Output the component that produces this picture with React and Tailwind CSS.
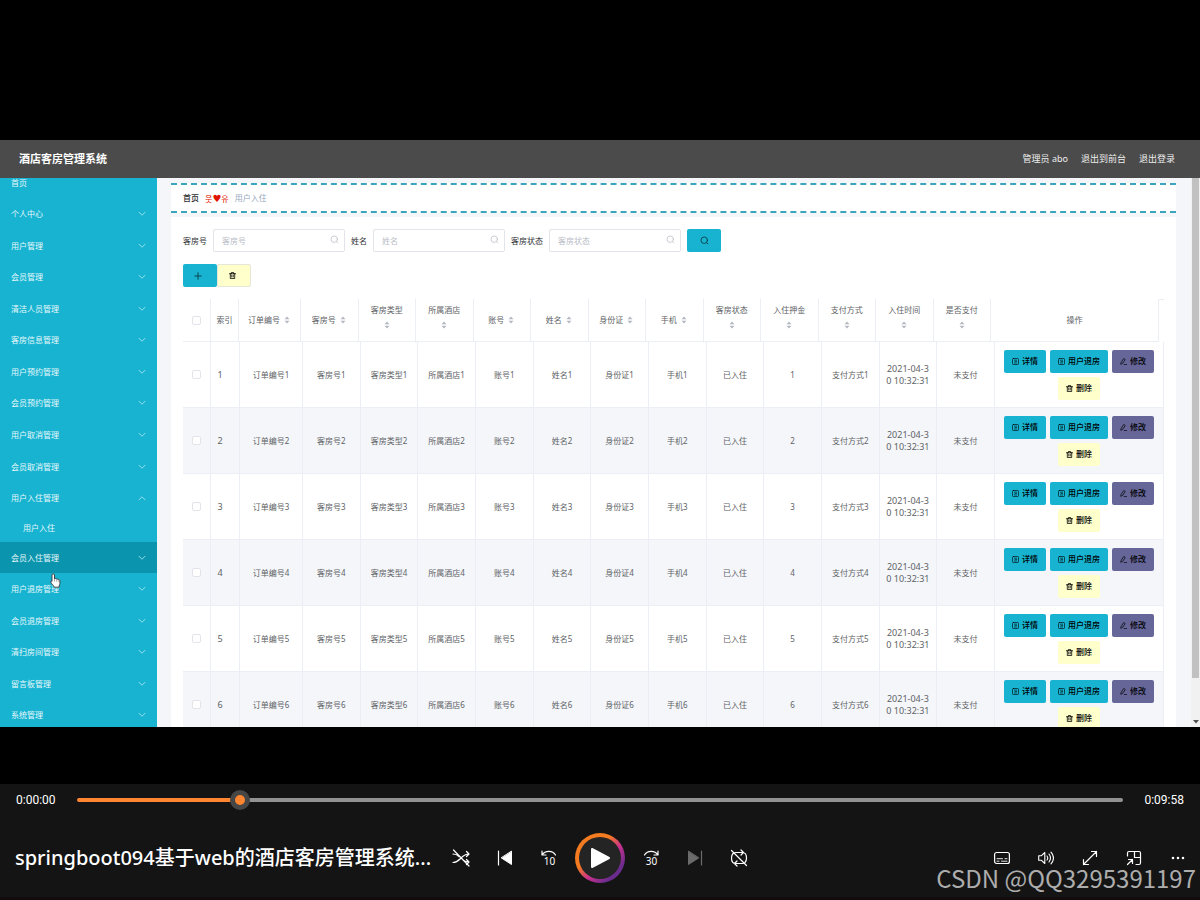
import { useState } from 'react'
import clsx from 'clsx'

const menu = [
  { label: '首页', plain: true },
  { label: '个人中心' },
  { label: '用户管理' },
  { label: '会员管理' },
  { label: '清洁人员管理' },
  { label: '客房信息管理' },
  { label: '用户预约管理' },
  { label: '会员预约管理' },
  { label: '用户取消管理' },
  { label: '会员取消管理' },
  { label: '用户入住管理', children: ['用户入住'] },
  { label: '会员入住管理', active: true },
  { label: '用户退房管理' },
  { label: '会员退房管理' },
  { label: '清扫房间管理' },
  { label: '留言板管理' },
  { label: '系统管理' },
]

const columns = [
  '订单编号', '客房号', '客房类型', '所属酒店', '账号', '姓名', '身份证',
  '手机', '客房状态', '入住押金', '支付方式', '入住时间', '是否支付',
]

const rows = [1, 2, 3, 4, 5, 6].map(n => ({
  id: n,
  cells: [
    `订单编号${n}`, `客房号${n}`, `客房类型${n}`, `所属酒店${n}`, `账号${n}`, `姓名${n}`,
    `身份证${n}`, `手机${n}`, '已入住', `${n}`, `支付方式${n}`, '2021-04-30 10:32:31', '未支付',
  ],
}))

function Icon({ size = 16, box = 16, className, children }) {
  return (
    <svg
      width={size}
      height={size}
      viewBox={`0 0 ${box} ${box}`}
      fill="none"
      stroke="currentColor"
      strokeLinecap="round"
      strokeLinejoin="round"
      className={clsx('shrink-0', className)}
      aria-hidden="true"
    >
      {children}
    </svg>
  )
}

const SearchIcon = ({ className }) => (
  <Icon size={9} className={className}>
    <circle cx="7.5" cy="7.5" r="5.8" strokeWidth="1.5" />
    <path d="M11.5 11.5 14 14" strokeWidth="1.5" />
  </Icon>
)

const TrashIcon = () => (
  <Icon size={7}>
    <path d="M1 4h14M5.5 4V1h5V4M3 4v11h10V4M6.3 7.500v4M9.7 7.500v4" strokeWidth="1.8" />
  </Icon>
)

const TicketIcon = () => (
  <Icon size={7}>
    <rect x="1" y="1" width="14" height="14" rx="2.500" strokeWidth="1.500" />
    <path d="M5.500 5h5M7 8h3.500M5.500 11.300h5" strokeWidth="1.300" />
  </Icon>
)

const EditIcon = () => (
  <Icon size={7}>
    <path d="M3 9.500 8.500 1l3.500 2.300-5.500 8.500L2.500 14zM9.500 15h5.500" strokeWidth="1.600" />
  </Icon>
)

const SortIcon = () => (
  <Icon size={8} className="text-[#b4b8c0]">
    <path d="M8 1 13 6.500H3zM8 15l5-5.500H3z" fill="currentColor" stroke="none" />
  </Icon>
)

function TopBar() {
  return (
    <header className="h-[38px] shrink-0 flex items-center justify-between pl-[19px] pr-[25px] bg-[#4b4b4b] text-white">
      <h1 className="text-[11px] font-bold">酒店客房管理系统</h1>
      <div className="flex gap-[13px] text-[9px] text-[#eeeeee]">
        <span>管理员 abo</span>
        <a href="#front">退出到前台</a>
        <a href="#logout">退出登录</a>
      </div>
    </header>
  )
}

function Sidebar() {
  return (
    <aside className="relative w-[157px] shrink-0 overflow-hidden bg-[#17b3d1] text-[8px] text-[#e6f8fb] flex flex-col">
      <nav className="flex-1 flex flex-col -mt-[11px] -mb-1">
        {menu.map(item => (
          <div key={item.label} className="contents">
            <button
              className={clsx(
                'flex-1 flex items-center justify-between px-[11px] text-left',
                item.active && 'bg-[#0b94ad]'
              )}
            >
              <span>{item.label}</span>
              {!item.plain && (
                <Icon size={8} className={clsx('text-[#a5e3ef]', item.children && 'rotate-180')}>
                  <path d="M2 4.5 8 10.5 14 4.5" strokeWidth="1.8" />
                </Icon>
              )}
            </button>
            {item.children?.map(child => (
              <a key={child} href="#checkin" className="h-7 shrink-0 flex items-center pl-[23px]">
                {child}
              </a>
            ))}
          </div>
        ))}
      </nav>
      <svg className="absolute left-[50px] top-[395px]" width="12" height="15" viewBox="0 0 12 15" aria-hidden="true">
        <path
          d="M3.2.8c.8 0 1.3.5 1.3 1.2v3.8c.3-.5 1.6-.5 1.9.3.5-.4 1.6-.2 1.8.6.7-.3 1.7 0 1.7 1v2.8c0 1.2-.9 1.8-.9 3.7H4.2C4 12.800 1.500 11 .8 9.200c-.3-1 .6-1.500 1.200-.8V2c0-.7.5-1.200 1.200-1.200z"
          fill="white"
          stroke="#333"
          strokeWidth="0.9"
        />
        <path d="M4.500 6v2.500M6.400 6.500v2.200M8.200 7v2" stroke="#777" strokeWidth="0.6" />
      </svg>
    </aside>
  )
}

function Breadcrumb() {
  return (
    <div className="h-[30px] shrink-0 flex items-center gap-[6px] pl-3 bg-white border-y-2 border-dashed border-[#3aa5bd] text-[8px]">
      <a href="#home" className="font-medium text-[#303133]">首页</a>
      <span className="text-[#e01500]">웃<span className="font-['DejaVu_Sans'] text-[10px]">♥</span>유</span>
      <span className="text-[#97a8be]">用户入住</span>
    </div>
  )
}

function SearchField({ label }) {
  return (
    <label className="flex items-center gap-[6px] text-[#303133]">
      {label}
      <span className="relative block">
        <input
          placeholder={label}
          className="block w-[132px] h-[23px] pl-2 pr-5 bg-white border border-[#e2e4ea] rounded-[2px] placeholder:text-[#b9bdc6] outline-none"
        />
        <SearchIcon className="absolute right-[6px] top-[6px] text-[#c0c4cc]" />
      </span>
    </label>
  )
}

function ActionButton({ tone, icon, children }) {
  return (
    <button
      className={clsx(
        'h-[23px] px-2 flex items-center gap-[3px] rounded-[2px] font-medium text-black',
        tone === 'cyan' && 'bg-[#17b3d1]',
        tone === 'purple' && 'bg-[#666699]',
        tone === 'yellow' && 'bg-[#ffffcc]'
      )}
    >
      {icon}
      {children}
    </button>
  )
}

function Check({ label }) {
  return (
    <input
      type="checkbox"
      aria-label={label}
      className="block mx-auto size-[9px] appearance-none bg-white border border-[#e2e4ea] rounded-[2px] checked:bg-[#17b3d1]"
    />
  )
}

function Columns({ index, order, action }) {
  return (
    <colgroup>
      <col className="w-7" />
      <col className={index} />
      <col className={order} />
      {columns.slice(1).map(c => <col key={c} />)}
      <col className={action} />
    </colgroup>
  )
}

function OrderTable() {
  return (
    <div className="mt-3 text-[8px] text-[#606266]">
      <div className="flex">
        <table className="flex-1 table-fixed border-separate border-spacing-0 w-full">
          <Columns index="w-7" order="w-[62px]" action="w-[168px]" />
          <thead>
            <tr className="h-[43px] [&>th]:border-b [&>th]:border-r [&>th]:border-[#ebeef5] [&>th]:font-normal [&>th]:p-0">
              <th><Check label="全选" /></th>
              <th>索引</th>
              {columns.map((c, i) => (
                <th key={c}>
                  <div className={clsx('flex items-center justify-center', c.length > 3 && i > 0 ? 'flex-col gap-1 pb-2 leading-[14px]' : 'gap-[3px]')}>
                    {c}
                    <SortIcon />
                  </div>
                </th>
              ))}
              <th>操作</th>
            </tr>
          </thead>
        </table>
        <div className="w-[5px] shrink-0 border-t border-[#ebeef5]" />
      </div>
      <table className="w-full table-fixed border-separate border-spacing-0">
        <Columns index="w-[29px]" order="w-[63px]" action="w-[169px]" />
        <tbody>
          {rows.map(row => (
            <tr
              key={row.id}
              className="h-[66px] even:bg-[#f4f6fa] [&>td]:border-b [&>td]:border-r [&>td]:border-[#ebeef5] [&>td]:p-0 [&>td]:text-center"
            >
              <td><Check label={`选择第${row.id}行`} /></td>
              <td><div className="pr-[10px] text-[9px]">{row.id}</div></td>
              {row.cells.map((cell, i) => (
                <td key={columns[i]}>
                  <div className={clsx(columns[i] === '入住时间' && 'px-[6px] text-[9px] leading-[12px] break-all')}>{cell}</div>
                </td>
              ))}
              <td>
                <div className="flex flex-wrap justify-center gap-1">
                  <ActionButton tone="cyan" icon={<TicketIcon />}>详情</ActionButton>
                  <ActionButton tone="cyan" icon={<TicketIcon />}>用户退房</ActionButton>
                  <ActionButton tone="purple" icon={<EditIcon />}>修改</ActionButton>
                  <ActionButton tone="yellow" icon={<TrashIcon />}>删除</ActionButton>
                </div>
              </td>
            </tr>
          ))}
        </tbody>
      </table>
    </div>
  )
}

function Content() {
  return (
    <main className="flex-1 min-w-0 overflow-hidden flex flex-col bg-[#f4f6fa] pt-[5px] pl-[14px] pr-[15px]">
      <Breadcrumb />
      <section className="mt-1 flex-1 min-h-0 overflow-hidden bg-white pt-3 px-3">
        <form className="flex items-center gap-[6px] text-[8px]" onSubmit={e => e.preventDefault()}>
          <SearchField label="客房号" />
          <SearchField label="姓名" />
          <SearchField label="客房状态" />
          <button aria-label="查询" className="w-[34px] h-[23px] flex items-center justify-center rounded-[2px] bg-[#17b3d1] text-[#0c3a44]">
            <SearchIcon />
          </button>
        </form>
        <div className="mt-3 flex">
          <button aria-label="新增" className="w-[34px] h-[23px] pr-1 flex items-center justify-center rounded-[2px] bg-[#17b3d1] text-[#0c3a44]">
            <Icon size={8}><path d="M8 1.500v13M1.500 8h13" strokeWidth="1.800" /></Icon>
          </button>
          <button aria-label="删除" className="w-[34px] h-[23px] pr-1 flex items-center justify-center rounded-[2px] bg-[#ffffcc] border border-[#e6e6d8] text-black">
            <TrashIcon />
          </button>
        </div>
        <OrderTable />
      </section>
    </main>
  )
}

function ScrollRail() {
  return (
    <div className="w-[9px] shrink-0 flex flex-col items-center bg-[#f1f1f1]" aria-hidden="true">
      <div className="flex-1 w-[7px] bg-[#c1c1c1]" />
      <div className="h-[49px] flex items-end pb-[3px]">
        <svg width="6" height="4" viewBox="0 0 6 4"><path d="M0 0h6L3 3.500z" fill="#505050" /></svg>
      </div>
    </div>
  )
}

function PlayerButton({ label, children, dim }) {
  return (
    <button aria-label={label} className={clsx('w-11 h-11 flex items-center justify-center', dim ? 'text-[#6b6b6b]' : 'text-white')}>
      {children}
    </button>
  )
}

function Player() {
  const [pos, setPos] = useState(149)
  const pct = pos / 10

  return (
    <footer className="shrink-0 bg-[#141414] text-white border-b-[3px] border-[#120a0d] font-['Noto_Sans','Noto_Sans_CJK_SC',sans-serif]">
      <div className="h-8 px-4 flex items-center text-[12px] font-['Roboto',sans-serif]">
        <span className="w-[61px]">0:00:00</span>
        <input
          type="range"
          min="0"
          max="1000"
          value={pos}
          onChange={e => setPos(Number(e.target.value))}
          aria-label="播放进度"
          className="flex-1 h-1 appearance-none rounded-full [&::-webkit-slider-thumb]:appearance-none [&::-webkit-slider-thumb]:size-5 [&::-webkit-slider-thumb]:rounded-full [&::-webkit-slider-thumb]:border-[5px] [&::-webkit-slider-thumb]:border-[#464646] [&::-webkit-slider-thumb]:bg-[#ff8530]"
          style={{ background: `linear-gradient(to right, #ff8530 ${pct}%, #929292 ${pct}%)` }}
        />
        <span className="w-[61px] text-right">0:09:58</span>
      </div>
      <div className="mt-[17px] pb-[14px] grid grid-cols-[1fr_auto_1fr] items-center">
        <h2 className="min-w-0 pl-[15px] text-[20px] leading-[28px] font-medium whitespace-nowrap">
          springboot094基于web的酒店客房管理系统...
        </h2>
        <div className="flex items-center h-[50px]">
          <PlayerButton label="随机播放">
            <Icon size={18} box={18}>
              <path d="M1 13.500c4 0 5.500-2 8-4.500s4-4 8-4M1 5c3 0 4.500 1 6 2.500M11 11c1.500 1.300 3 2 6 2M14.500 2.500 17 5l-2.500 2.500M14.500 10.500 17 13l-2.500 2.500M1.500 1l15.500 16" strokeWidth="1.200" />
            </Icon>
          </PlayerButton>
          <PlayerButton label="上一个">
            <Icon><path d="M1.500 1v14" strokeWidth="1.200" /><path d="M14.500 1.500v13L4.500 8z" fill="currentColor" strokeWidth="1" /></Icon>
          </PlayerButton>
          <PlayerButton label="后退 10 秒">
            <Icon size={18} box={18}>
              <path d="M2 2v4h4M2.300 5.700C5 1.500 12.500.8 15.500 6" strokeWidth="1.200" />
              <text x="9.500" y="16" textAnchor="middle" fontSize="10" fill="currentColor" stroke="none">10</text>
            </Icon>
          </PlayerButton>
          <div className="w-[58px] flex justify-center">
            <button aria-label="播放" className="size-[50px] p-1 rounded-full bg-[linear-gradient(135deg,#f47b20_38%,#c9318c_58%,#6b2c8f_80%)]">
              <span className="size-full rounded-full bg-[#242424] flex items-center justify-center">
                <Icon size={22} box={22}><path d="M3 2v18L20 11z" fill="currentColor" strokeWidth="2" /></Icon>
              </span>
            </button>
          </div>
          <PlayerButton label="前进 30 秒">
            <Icon size={18} box={18}>
              <path d="M16 2v4h-4M15.700 5.700C13 1.500 5.500.8 2.500 6" strokeWidth="1.200" />
              <text x="9.500" y="16" textAnchor="middle" fontSize="10" fill="currentColor" stroke="none">30</text>
            </Icon>
          </PlayerButton>
          <PlayerButton label="下一个" dim>
            <Icon><path d="M14.500 1v14" strokeWidth="1.200" /><path d="M1.500 1.500v13L11.500 8z" fill="currentColor" strokeWidth="1" /></Icon>
          </PlayerButton>
          <PlayerButton label="循环">
            <Icon size={18} box={18}>
              <path d="M5 3.500h7.500c2.500 0 4 2 4 5.500 0 2-.5 3.500-1.500 4.500M11 1l2.500 2.500L11 6M13 14.500H5.500c-2.500 0-4-2-4-5.500 0-2 .5-3.500 1.500-4.500M7 12l-2.500 2.500L7 17M1.500 1.500l15 15" strokeWidth="1.200" />
            </Icon>
          </PlayerButton>
        </div>
        <div className="flex justify-end">
          <PlayerButton label="字幕">
            <Icon><rect x="0.600" y="2.500" width="14.800" height="11" rx="2" strokeWidth="1.200" /><path d="M3 8.700h5.500M11 8.700h2M3 11.200h2M7.500 11.200H13" strokeWidth="0.900" /></Icon>
          </PlayerButton>
          <PlayerButton label="音量">
            <Icon><path d="M.7 5.800v4.400h2.500l3.600 3.300v-11L3.200 5.800zM9 6q1.500 2 0 4M11 4q3 4 0 8M13 2.200q5 5.800 0 11.600" strokeWidth="1.100" /></Icon>
          </PlayerButton>
          <PlayerButton label="全屏">
            <Icon><path d="M1.500 14.500 14.500 1.500M9.500 1.500h5v5M1.500 9.500v5h5" strokeWidth="1.200" /></Icon>
          </PlayerButton>
          <PlayerButton label="小窗播放">
            <Icon><path d="M1.500 6V3q0-1.500 1.500-1.500h10q1.500 0 1.500 1.500v10q0 1.500-1.500 1.500H10M8.500 1.500v6h6M1.500 14.500 6.500 9.500M2.500 9.500h4v4" strokeWidth="1.200" /></Icon>
          </PlayerButton>
          <PlayerButton label="更多">
            <Icon><path d="M3 8h.01M8 8h.01M13 8h.01" strokeWidth="2.600" /></Icon>
          </PlayerButton>
        </div>
      </div>
    </footer>
  )
}

export default function App() {
  return (
    <div className="relative h-screen overflow-hidden flex flex-col bg-black font-['Noto_Sans','Noto_Sans_CJK_SC',sans-serif]" lang="zh-CN">
      <div className="flex-1 min-h-0 flex flex-col pt-[140px] pb-[57px]">
        <TopBar />
        <div className="flex-1 min-h-0 flex">
          <Sidebar />
          <Content />
          <ScrollRail />
        </div>
      </div>
      <Player />
      <p className="absolute right-1 bottom-[6px] text-[24px] leading-[32px] text-[#adadad] font-['Noto_Sans_CJK_SC',sans-serif] pointer-events-none">
        CSDN @QQ3295391197
      </p>
    </div>
  )
}
